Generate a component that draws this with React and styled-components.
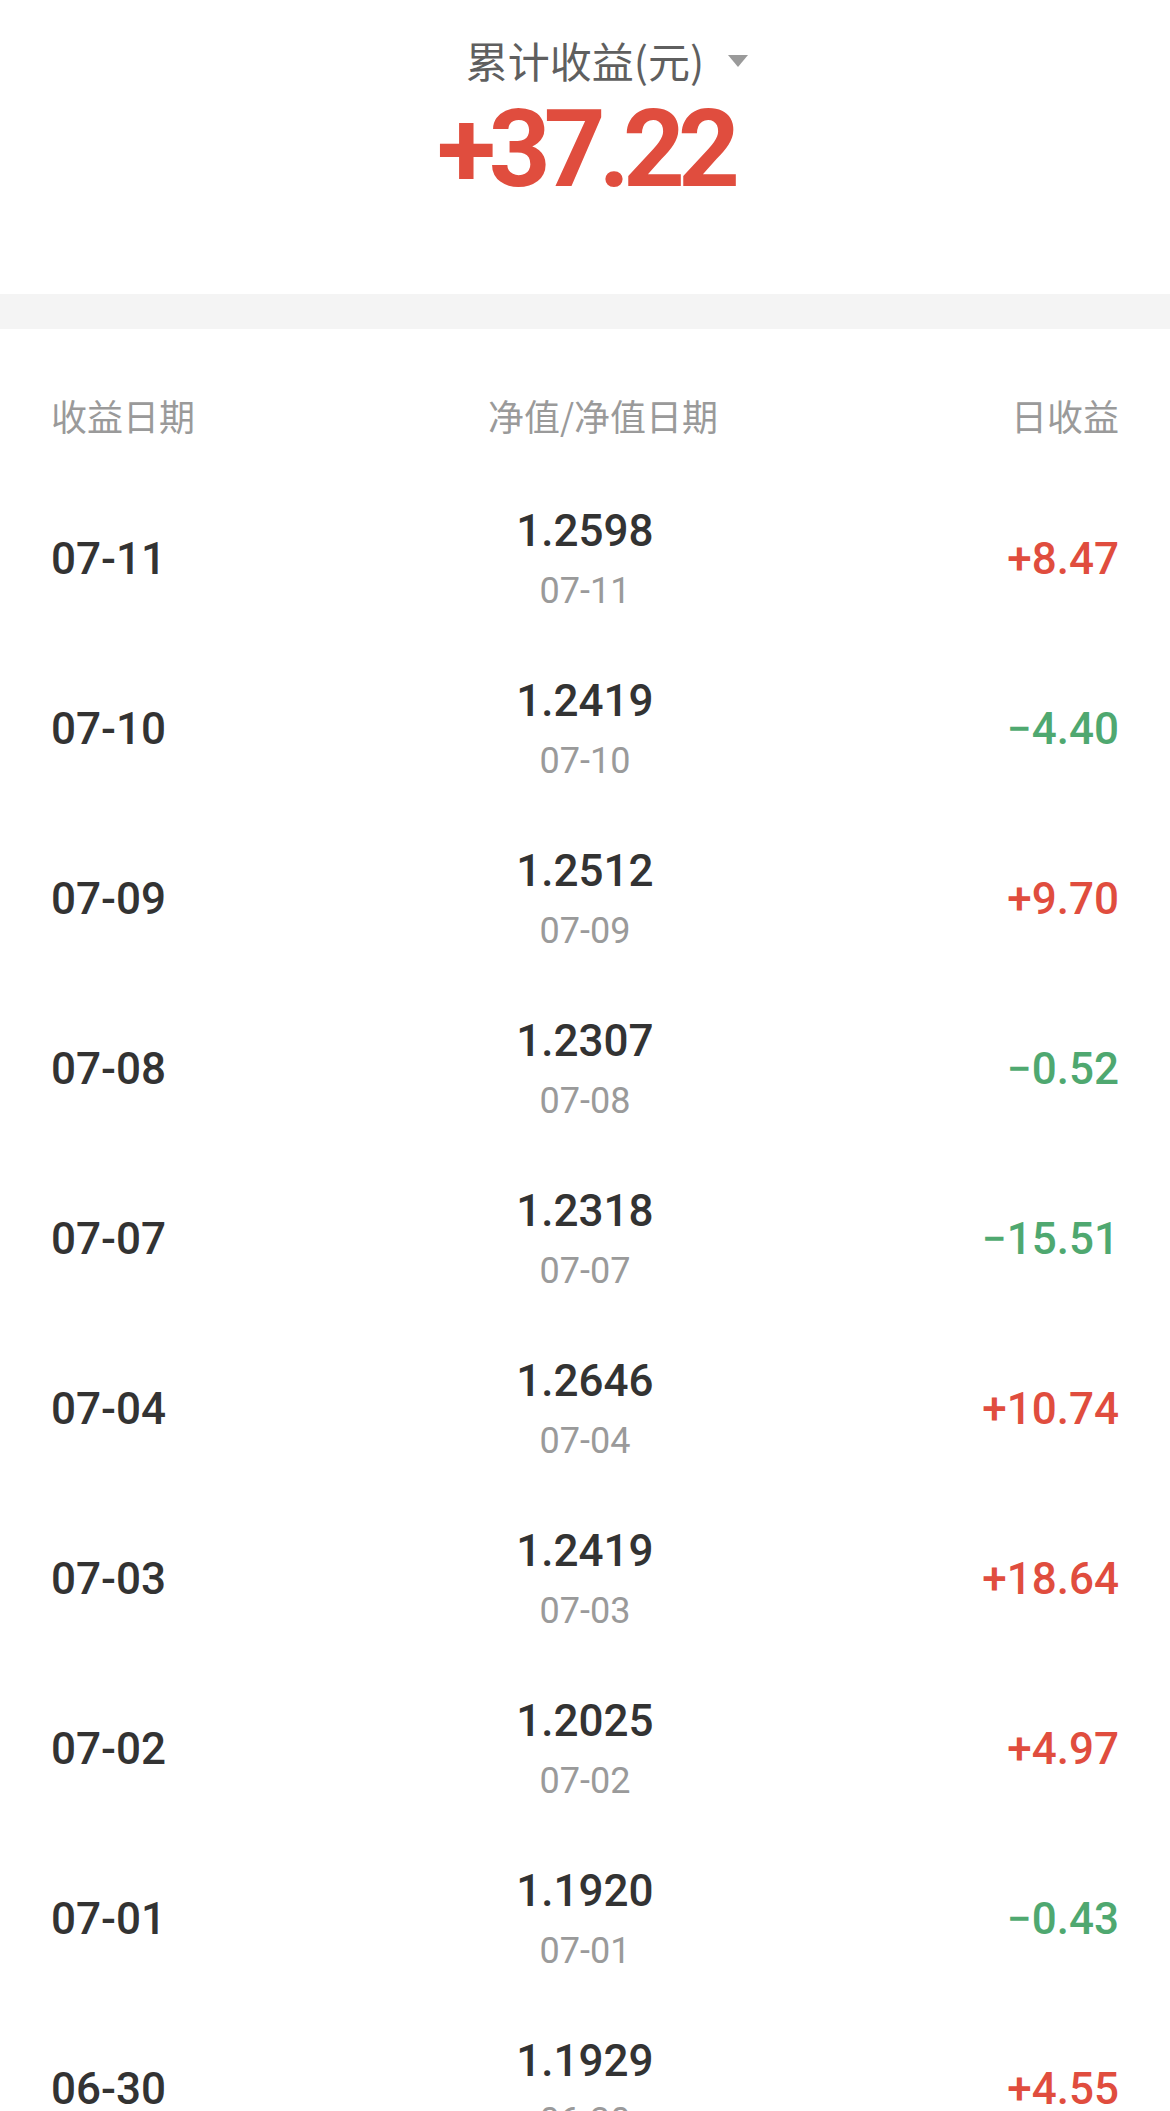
import React from 'react';
import styled, { createGlobalStyle } from 'styled-components';

const GlobalStyle = createGlobalStyle`
  body {
    margin: 0;
    background: #fff;
    font-family: Roboto, "Noto Sans CJK SC", sans-serif;
  }
`;

const Page = styled.div`
  width: 1170px;
  background: #fff;
`;

const Summary = styled.div`
  height: 294px;
  display: flex;
  flex-direction: column;
  align-items: center;
  padding-top: 30px;
  box-sizing: border-box;
`;

const SummaryTitle = styled.div`
  display: flex;
  align-items: center;
  gap: 24px;
  height: 60px;
  font-family: "Noto Sans CJK SC", sans-serif;
  font-size: 42px;
  line-height: 60px;
  color: #5f5f5f;
  padding-left: 44px;
`;

const Caret = styled.span`
  width: 0;
  height: 0;
  border-left: 10px solid transparent;
  border-right: 10px solid transparent;
  border-top: 12px solid #9a9a9a;
  margin-top: 2px;
`;

const Total = styled.div`
  margin-top: 5px;
  font-family: Roboto, "Liberation Sans", sans-serif;
  font-weight: 700;
  font-size: 108px;
  line-height: 108px;
  letter-spacing: -7px;
  color: #e04d3e;
`;

const Divider = styled.div`
  height: 35px;
  background: #f4f4f4;
`;

const Table = styled.div`
  padding: 0 51px;
`;

const HeadRow = styled.div`
  display: flex;
  justify-content: space-between;
  padding: 66px 0 39px;
  font-family: "Noto Sans CJK SC", sans-serif;
  font-size: 36px;
  line-height: 40px;
  color: #9a9a9a;
`;

const Row = styled.div`
  height: 170px;
  display: grid;
  grid-template-columns: 1fr auto 1fr;
  align-items: center;
`;

const DateCell = styled.div`
  font-size: 44px;
  font-weight: 500;
  color: #333;
`;

const NavCell = styled.div`
  display: flex;
  flex-direction: column;
  align-items: center;
`;

const NavValue = styled.div`
  font-size: 44px;
  font-weight: 500;
  line-height: 56px;
  color: #333;
`;

const NavDate = styled.div`
  margin-top: 8px;
  font-size: 36px;
  line-height: 48px;
  color: #9a9a9a;
`;

const Profit = styled.div`
  justify-self: end;
  font-size: 44px;
  font-weight: 500;
  color: ${p => (p.$up ? '#e04d3e' : '#4fa870')};
`;

const rows = [
  ['07-11', '1.2598', '+8.47'],
  ['07-10', '1.2419', '−4.40'],
  ['07-09', '1.2512', '+9.70'],
  ['07-08', '1.2307', '−0.52'],
  ['07-07', '1.2318', '−15.51'],
  ['07-04', '1.2646', '+10.74'],
  ['07-03', '1.2419', '+18.64'],
  ['07-02', '1.2025', '+4.97'],
  ['07-01', '1.1920', '−0.43'],
  ['06-30', '1.1929', '+4.55'],
];

const App = () => {
  return (
    <Page>
      <GlobalStyle />
      <Summary>
        <SummaryTitle>
          累计收益(元)
          <Caret />
        </SummaryTitle>
        <Total>+37.22</Total>
      </Summary>
      <Divider />
      <Table>
        <HeadRow>
          <span>收益日期</span>
          <span>净值/净值日期</span>
          <span>日收益</span>
        </HeadRow>
        {rows.map(([date, nav, profit]) => (
          <Row key={date}>
            <DateCell>{date}</DateCell>
            <NavCell>
              <NavValue>{nav}</NavValue>
              <NavDate>{date}</NavDate>
            </NavCell>
            <Profit $up={profit[0] === '+'}>{profit}</Profit>
          </Row>
        ))}
      </Table>
    </Page>
  );
};

export default App;
